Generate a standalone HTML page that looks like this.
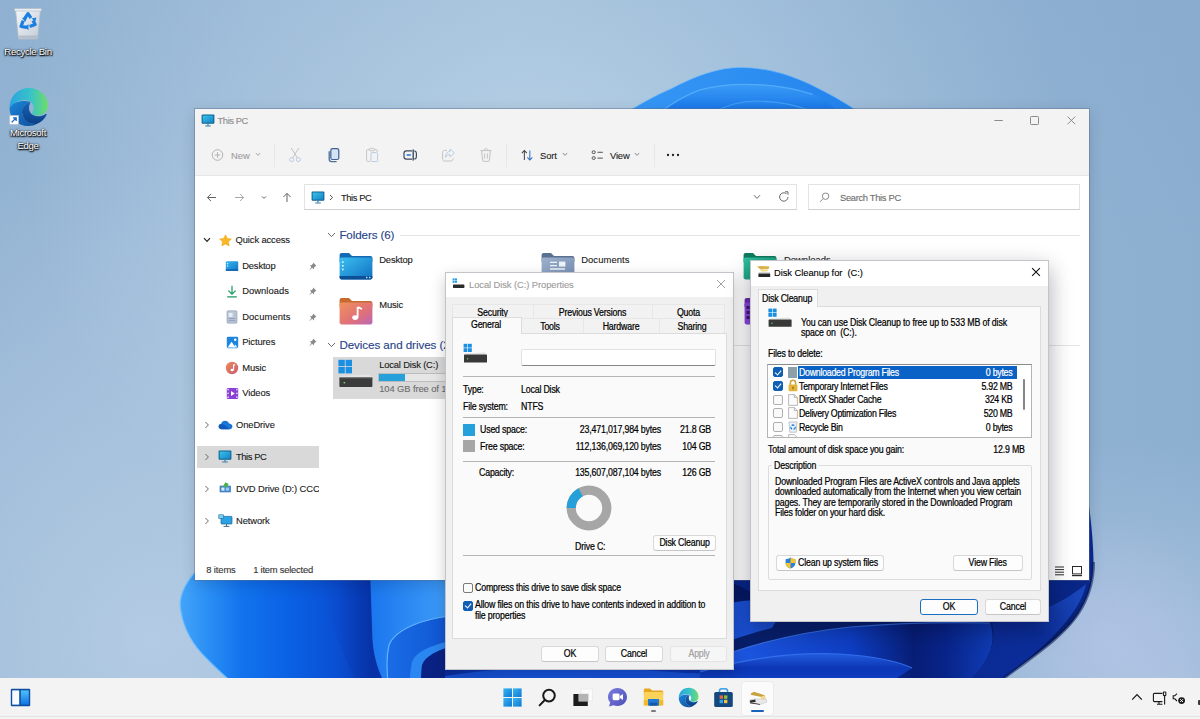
<!DOCTYPE html>
<html lang="en">
<head>
<meta charset="utf-8">
<title>This PC - Disk Cleanup</title>
<style>
*{box-sizing:border-box;margin:0;padding:0}
html,body{width:1200px;height:719px;overflow:hidden;background:#9bb8d6}
body{font-family:"Liberation Sans",sans-serif;font-size:9.4px;color:#1a1a1a;position:relative}
#desk{position:absolute;left:0;top:0;width:1200px;height:719px;overflow:hidden}
.abs{position:absolute}
.t{position:absolute;white-space:pre;line-height:12px;letter-spacing:-.1px;-webkit-text-stroke:.12px currentColor}
.d{position:absolute;white-space:pre;font-size:10px;line-height:12px;letter-spacing:-.2px;color:#000;transform:scaleX(.88);transform-origin:0 50%;margin-top:.7px;-webkit-text-stroke:.22px currentColor}
.d.r{transform-origin:100% 50%}
.d.c{transform-origin:50% 50%}
#flist .d{letter-spacing:-.3px}
svg{position:absolute;overflow:visible}
/* wallpaper */
#wall{left:0;top:0;width:1200px;height:719px}
/* desktop icons */
.dlabel{position:absolute;color:#fff;text-align:center;font-size:9.6px;line-height:12.6px;letter-spacing:-.3px;text-shadow:0 0 2px #000,0 1px 2px #000,1px 1px 1px rgba(0,0,0,.8)}
/* explorer */
#exp{left:195px;top:109px;width:894px;height:471px;background:#fff;box-shadow:0 0 0 1px rgba(90,110,140,.45),0 4px 14px rgba(0,0,30,.16)}
#exp .top{left:0;top:0;width:894px;height:67px;background:#f3f3f3;border-bottom:1px solid #e6e6e6}
.vsep{position:absolute;width:1px;background:#e7e7e7}
.box{position:absolute;background:#fff;border:1px solid #e3e3e3;border-bottom-color:#d0d0d0}
.hl{position:absolute;height:1px;background:#e4e4e4}
/* dialogs */
.dlg{position:absolute;background:#f0f0f0;border:1px solid #c3c4c9;box-shadow:0 8px 22px rgba(0,0,20,.33)}
.dlg .tb{position:absolute;left:0;top:0;right:0;background:#fff}
.btn{position:absolute;background:#fdfdfd;border:1px solid #d8d8d8;border-bottom-color:#c6c6c6;border-radius:3px;text-align:center;line-height:14px;color:#000;white-space:nowrap}
.btn span{display:inline-block;font-size:10px;letter-spacing:-.2px;transform:scaleX(.88);transform-origin:50% 50%;-webkit-text-stroke:.22px currentColor}
.line{position:absolute;height:1px;background:#b4b4b4}
.cb{position:absolute;width:10px;height:10px;border:1px solid #7a7a7a;border-radius:2px;background:#fafafa}
.cb.on{background:#0f5fb4;border-color:#0f5fb4}
.cb.on:after{content:"";position:absolute;left:2.2px;top:.2px;width:3px;height:5.2px;border:solid #fff;border-width:0 1.2px 1.2px 0;transform:rotate(40deg)}
/* taskbar */
#task{left:0;top:678px;width:1200px;height:41px;background:#f3f3f3;border-top:1px solid rgba(243,243,243,.55)}
</style>
</head>
<body>
<div id="desk">
<!--WALL-->
<svg id="wall" class="abs" viewBox="0 0 1200 719" width="1200" height="719">
<defs>
<linearGradient id="bg0" x1="0" y1="0" x2="1" y2="0"><stop offset="0" stop-color="#94b4d3"/><stop offset=".42" stop-color="#a6c3de"/><stop offset=".76" stop-color="#93b4d4"/><stop offset="1" stop-color="#8cafd0"/></linearGradient>
<radialGradient id="bg1" cx="540" cy="120" r="520" gradientUnits="userSpaceOnUse"><stop offset="0" stop-color="#c0d8ea" stop-opacity=".75"/><stop offset="1" stop-color="#c0d8ea" stop-opacity="0"/></radialGradient>
<radialGradient id="bg2" cx="150" cy="640" r="480" gradientUnits="userSpaceOnUse"><stop offset="0" stop-color="#b9cfe6" stop-opacity=".8"/><stop offset="1" stop-color="#b9cfe6" stop-opacity="0"/></radialGradient>
<radialGradient id="bg3" cx="1150" cy="700" r="260" gradientUnits="userSpaceOnUse"><stop offset="0" stop-color="#b4c8e4" stop-opacity=".8"/><stop offset="1" stop-color="#b4c8e4" stop-opacity="0"/></radialGradient>
<linearGradient id="bg4" x1="0" y1="0" x2="0" y2="1"><stop offset="0" stop-color="#7fa3c8" stop-opacity=".22"/><stop offset=".35" stop-color="#7fa3c8" stop-opacity="0"/></linearGradient>
<linearGradient id="ta" x1="632" y1="0" x2="854" y2="0" gradientUnits="userSpaceOnUse"><stop offset="0" stop-color="#3596f5"/><stop offset=".5" stop-color="#2e8ff2"/><stop offset="1" stop-color="#2382ec"/></linearGradient>
<linearGradient id="tb" x1="0" y1="84" x2="0" y2="112" gradientUnits="userSpaceOnUse"><stop offset="0" stop-color="#3a9cf6"/><stop offset="1" stop-color="#1774e8"/></linearGradient>
<linearGradient id="tc" x1="0" y1="101" x2="0" y2="114" gradientUnits="userSpaceOnUse"><stop offset="0" stop-color="#2a8cf2"/><stop offset="1" stop-color="#1268de"/></linearGradient>
<linearGradient id="bl" x1="180" y1="0" x2="372" y2="0" gradientUnits="userSpaceOnUse"><stop offset="0" stop-color="#45a4f9"/><stop offset=".14" stop-color="#2b90f5"/><stop offset=".32" stop-color="#1273ed"/><stop offset=".58" stop-color="#0a60e4"/><stop offset=".82" stop-color="#0a4fd2"/><stop offset="1" stop-color="#0838b0"/></linearGradient>
<linearGradient id="pl" x1="370" y1="0" x2="450" y2="0" gradientUnits="userSpaceOnUse"><stop offset="0" stop-color="#1a76ee"/><stop offset="1" stop-color="#3f9df8"/></linearGradient>
<linearGradient id="nv" x1="0" y1="579" x2="0" y2="680" gradientUnits="userSpaceOnUse"><stop offset="0" stop-color="#0a2a94"/><stop offset=".5" stop-color="#08206e"/><stop offset="1" stop-color="#061a62"/></linearGradient>
<linearGradient id="pm" x1="730" y1="0" x2="1000" y2="0" gradientUnits="userSpaceOnUse"><stop offset="0" stop-color="#1d58e2"/><stop offset=".45" stop-color="#0e3ec4"/><stop offset=".68" stop-color="#071e76"/><stop offset=".8" stop-color="#08248a"/><stop offset="1" stop-color="#1040bc"/></linearGradient>
<linearGradient id="blf" x1="320" y1="0" x2="372" y2="0" gradientUnits="userSpaceOnUse"><stop offset="0" stop-color="#0a4cd0" stop-opacity="0"/><stop offset="1" stop-color="#0730a4" stop-opacity=".8"/></linearGradient>
<linearGradient id="pl2" x1="388" y1="0" x2="450" y2="0" gradientUnits="userSpaceOnUse"><stop offset="0" stop-color="#1a6ce6"/><stop offset="1" stop-color="#0f55d2"/></linearGradient>
<linearGradient id="pc2" x1="0" y1="652" x2="0" y2="684" gradientUnits="userSpaceOnUse"><stop offset="0" stop-color="#2460e4"/><stop offset=".5" stop-color="#0c36b4"/><stop offset="1" stop-color="#1244c8"/></linearGradient>
<linearGradient id="pd" x1="966" y1="684" x2="1080" y2="590" gradientUnits="userSpaceOnUse"><stop offset="0" stop-color="#0a2a92"/><stop offset=".6" stop-color="#0c2e9c"/><stop offset="1" stop-color="#1a48bc"/></linearGradient>
<linearGradient id="sb" x1="445" y1="0" x2="736" y2="0" gradientUnits="userSpaceOnUse"><stop offset="0" stop-color="#0a2a9a"/><stop offset=".25" stop-color="#0e44c8"/><stop offset=".7" stop-color="#0c3cc0"/><stop offset="1" stop-color="#0a2c9c"/></linearGradient>
<radialGradient id="bg5" cx="1110" cy="640" r="120" gradientUnits="userSpaceOnUse"><stop offset="0" stop-color="#b4c4e6" stop-opacity=".7"/><stop offset="1" stop-color="#b4c4e6" stop-opacity="0"/></radialGradient>
</defs>
<rect width="1200" height="719" fill="url(#bg0)"/>
<rect width="1200" height="719" fill="url(#bg1)"/>
<rect width="1200" height="719" fill="url(#bg2)"/>
<rect width="1200" height="719" fill="url(#bg3)"/>
<rect width="1200" height="719" fill="url(#bg4)"/>
<rect width="1200" height="719" fill="url(#bg5)"/>
<!-- top arch -->
<path d="M624 114 C645 101 660 93.5 671 88.8 C695 76 718 67.4 740.5 67.4 C768 67.4 795 76 819 88.8 C832 95 847 104 862 114 Z" fill="url(#ta)" stroke="#6cb8fb" stroke-width="1" stroke-opacity=".7"/>
<path d="M658 114 C675 101 688 94 700 89.9 C715 85.5 730 84.3 745 84.3 C772 84.3 795 88.5 812.5 94.4 C822 98 831 104 842 114 Z" fill="url(#tb)"/>
<path d="M658 114 C675 101 688 94 700 89.9 C715 85.5 730 84.3 745 84.3 C772 84.3 795 88.5 812.5 94.4" fill="none" stroke="#58b0fb" stroke-width="1.3" stroke-opacity=".85"/>
<path d="M710 114 C728 104 742 101 756 101 C776 101 794 104 814 112 L814 114 Z" fill="url(#tc)"/>
<path d="M710 114 C728 104 742 101 756 101 C776 101 794 104 814 112" fill="none" stroke="#4aa6f8" stroke-width="1.1" stroke-opacity=".8"/>
<!-- bottom left -->
<path d="M197 570 C183 585 178 600 181 612 C184 630 194 646 206 658 C216 668 224 676 234 684 L400 684 L400 570 Z" fill="url(#bl)"/>
<path d="M197 570 C183 585 178 600 181 612 C184 630 194 646 206 658 C216 668 224 676 234 684" fill="none" stroke="#6fc0ff" stroke-width="1.4" opacity=".8"/>
<path d="M318 570 C326 610 340 650 358 684 L400 684 L400 570 Z" fill="url(#blf)"/>
<path d="M370 570 L372.5 640 C374 660 379 672 385 684 L450 684 L450 570 Z" fill="url(#pl)"/>
<path d="M450 616 C425 619 396 628 389 645 C386 658 387 670 388 684 L450 684 Z" fill="url(#pl2)" stroke="#62b4fd" stroke-width="1.2"/>
<path d="M450 641 C432 645 415 652 412 662 C410 670 410 676 410 684 L450 684 Z" fill="#2a86f0"/>
<path d="M450 647 C438 650 425 656 422 665 C421 672 421 678 421 684 L450 684 Z" fill="#0a2284"/>
<!-- bottom middle/right -->
<path d="M445 570 L1089 570 L1089 506 C1091 520 1093.5 545 1093.5 562 C1093.5 585 1086 602 1078 614 C1066 632 1048 646 1004 678 L1000 684 L445 684 Z" fill="url(#nv)"/>
<path d="M445 655 H736 V684 H445 Z" fill="url(#sb)"/>
<path d="M445 676 C500 668 560 664 620 668 C660 671 700 676 736 672 L736 684 H445 Z" fill="#1a56dc" opacity=".8"/>
<path d="M700 606 C730 596 760 590 800 588 C790 600 780 614 772 628 C748 634 724 642 700 654 Z" fill="#1a50d4"/>
<path d="M700 575 C725 578 745 586 760 600 C740 600 720 604 700 612 Z" fill="#061a66"/>
<path d="M700 690 L700 664 C750 644 800 632 850 627 C900 623 950 622 990 623 C997 642 990 662 966 684 Z" fill="url(#pm)"/>
<path d="M700 664 C750 644 800 632 850 627 C900 623 950 622 990 623" fill="none" stroke="#3f7af0" stroke-width="1.2" opacity=".8"/>
<path d="M700 690 L700 672 C740 660 790 652 840 654 C870 656 895 660 912 668 C900 676 890 682 880 690 Z" fill="url(#pc2)"/>
<path d="M700 672 C740 660 790 652 840 654 C870 656 895 660 912 668" fill="none" stroke="#3a74ee" stroke-width="1.1" opacity=".85"/>
<path d="M992 623 C1030 618 1062 604 1086 584 C1082 606 1060 636 1004 678 L966 684 C990 662 997 642 992 623 Z" fill="url(#pd)"/>
<path d="M1093.5 562 C1093.5 585 1086 602 1078 614 C1066 632 1048 646 1004 678" fill="none" stroke="#05154f" stroke-width="3" opacity=".55"/>
</svg>
<!--/WALL-->
<!--DESKICONS-->
<!-- Recycle Bin -->
<svg class="abs" style="left:13px;top:7px" width="30" height="34" viewBox="0 0 30 34">
<defs><linearGradient id="rb1" x1="0" y1="0" x2="1" y2="1"><stop offset="0" stop-color="#f4f7fa"/><stop offset="1" stop-color="#c3ccd6"/></linearGradient></defs>
<path d="M2.5 2.5 L27.5 2.5 L24.5 32 L5.5 32 Z" fill="url(#rb1)" stroke="#b4bec9" stroke-width=".8"/>
<path d="M1.5 1.5 H28.5 V4 H1.5 Z" fill="#e9eef3" stroke="#aeb9c5" stroke-width=".6"/>
<path d="M5.8 28.5 H24.2 L24 31.5 H6.1 Z" fill="#aab4c0" opacity=".7"/>
<g fill="none" stroke="#1b7fe2" stroke-width="3.2" stroke-linejoin="round" stroke-linecap="butt">
<path d="M11.6 11.6 L15 6.6 L18 11"/><path d="M20 13.4 L22.2 17.6 L16.6 19.6"/><path d="M13.4 20.4 L8 19.4 L10.2 13.6"/>
</g>
<g fill="#1b7fe2"><path d="M9 11 L14.2 10.4 L12.2 15 Z"/><path d="M22.4 14.6 L18.4 11.6 L23.4 10.4 Z"/><path d="M15.4 17.2 L15.6 23 L11 20.2 Z"/></g>
</svg>
<div class="dlabel" style="left:-12px;top:46px;width:80px">Recycle Bin</div>
<!-- Edge -->
<svg class="abs" style="left:8px;top:87px" width="41" height="40" viewBox="0 0 41 40">
<defs>
<linearGradient id="eg1" x1="0" y1="0" x2="1" y2="0"><stop offset="0" stop-color="#2ba3e0"/><stop offset=".55" stop-color="#38c3c8"/><stop offset="1" stop-color="#6fdc6a"/></linearGradient>
<linearGradient id="eg2" x1="0" y1="0" x2="1" y2="1"><stop offset="0" stop-color="#1b86d8"/><stop offset="1" stop-color="#0f4f9e"/></linearGradient>
<linearGradient id="eg3" x1="0" y1="0" x2="0" y2="1"><stop offset="0" stop-color="#1565b8"/><stop offset="1" stop-color="#0c3f86"/></linearGradient>
</defs>
<path d="M1.5 21 C1.5 9 10 1 21 1 C32 1 40 9 40 18.5 C40 25 35 28.5 29.5 28.5 C25.5 28.5 23.5 27 24.5 25.2 C26 23 26 21 25.5 19 C24.5 15 21 13 17 13 C10 13 4 17.5 1.5 21 Z" fill="url(#eg1)"/>
<path d="M1.5 21 C1.5 31 9.5 39 20 39 C24 39 27 38 28.5 37 C21 37.5 14.5 32.5 14 25.5 C13.8 19.5 18.5 15.5 22.5 15 C15 12.5 5 15 1.5 21 Z" fill="url(#eg2)"/>
<path d="M14 25.5 C14.5 32.5 21 37.8 28.5 37 C33 35.5 36.5 32 38.5 28 C39 27 38 26.6 37.2 27.2 C34 29.5 28.5 30 25 28 C20.5 25.5 20 20 22.5 15 C18.5 15.5 13.8 19.5 14 25.5 Z" fill="url(#eg3)"/>
</svg>
<svg class="abs" style="left:9px;top:115px" width="10" height="10" viewBox="0 0 10 10"><rect x=".3" y=".3" width="9.4" height="9.4" fill="#fff" stroke="#9fb3c8" stroke-width=".6"/><path d="M2.6 7.4 L7 3 M4 2.8 H7.2 V6" fill="none" stroke="#1b66c9" stroke-width="1.3"/></svg>
<div class="dlabel" style="left:-12px;top:127px;width:80px">Microsoft<br>Edge</div>
<!--/DESKICONS-->
<!--EXPLORER-->
<svg class="abs" width="0" height="0" style="left:0;top:0"><defs>
<linearGradient id="pcg" x1="0" y1="0" x2="1" y2="1"><stop offset="0" stop-color="#39c2ea"/><stop offset="1" stop-color="#1583c6"/></linearGradient>
<symbol id="pc" viewBox="0 0 14 13"><rect x=".6" y=".6" width="12.8" height="9.2" rx="1" fill="#0f5f8e"/><rect x="1.6" y="1.5" width="10.8" height="7.2" fill="url(#pcg)"/><path d="M6.2 9.8 H7.8 V11.6 H6.2 Z" fill="#4a90b8"/><path d="M4.2 12 H9.8" stroke="#3a7fa8" stroke-width="1"/></symbol>
</defs></svg>
<div id="expl" class="abs" style="left:0;top:0;width:1200px;height:719px">
<div id="exp" class="abs"><div class="top abs"></div></div>
<!-- title -->
<svg class="abs pcico" style="left:201px;top:114px" width="14" height="13" viewBox="0 0 14 13"><use href="#pc"/></svg>
<div class="t" style="left:217.6px;top:114.8px;color:#8c8c8c;letter-spacing:-.45px">This PC</div>
<svg class="abs" style="left:990px;top:113px" width="90" height="14" viewBox="0 0 90 14" fill="none" stroke="#8a8a8a" stroke-width="1"><path d="M4.4 7.5 H12.8"/><rect x="40.5" y="3.5" width="8" height="8" rx=".8"/><path d="M77.6 3.6 L85.2 11.2 M85.2 3.6 L77.6 11.2"/></svg>
<!-- toolbar -->
<svg class="abs" style="left:211px;top:148px" width="14" height="14" viewBox="0 0 14 14" fill="none" stroke="#b4b4b4" stroke-width="1"><circle cx="6.5" cy="7" r="5.3"/><path d="M6.5 4.2 V9.8 M3.7 7 H9.3"/></svg>
<div class="t" style="left:231px;top:149.5px;color:#a0a0a0;letter-spacing:0">New</div>
<svg class="abs" style="left:255px;top:152px" width="6" height="5" viewBox="0 0 6 5" fill="none" stroke="#a8a8a8" stroke-width="1"><path d="M.8 1 L3 3.4 L5.2 1"/></svg>
<div class="vsep" style="left:274px;top:144px;height:23px"></div>
<!-- cut -->
<svg class="abs" style="left:288px;top:147px" width="14" height="16" viewBox="0 0 14 16" fill="none" stroke="#b9cde4" stroke-width="1"><path d="M3.2 1 L9.4 11 M10.8 1 L4.6 11" stroke="#c4c4c4"/><circle cx="3.6" cy="12.6" r="2"/><circle cx="10.4" cy="12.6" r="2"/></svg>
<!-- copy -->
<svg class="abs" style="left:327px;top:147px" width="14" height="16" viewBox="0 0 14 16" fill="none"><path d="M2.2 4.2 V12.2 C2.2 13.8 3.2 14.6 4.6 14.6 H9.6" stroke="#4d6c98" stroke-width="1.3"/><rect x="3.8" y="1.7" width="8" height="10.8" rx="1.8" fill="#d3e3f5" stroke="#3d5f92" stroke-width="1.2"/></svg>
<!-- paste -->
<svg class="abs" style="left:365px;top:147px" width="14" height="16" viewBox="0 0 14 16" fill="none" stroke="#c6c6c6" stroke-width="1"><path d="M4.4 2.6 H2.6 C2 2.6 1.6 3 1.6 3.6 V13.4 C1.6 14 2 14.4 2.6 14.4 H5"/><path d="M9.4 2.6 H11.2 C11.8 2.6 12.2 3 12.2 3.6 V5"/><rect x="4.4" y="1.4" width="5" height="2.4" rx=".8"/><rect x="6" y="5.6" width="6.6" height="9" rx="1" stroke="#b9cde4"/></svg>
<!-- rename -->
<svg class="abs" style="left:402px;top:147px" width="16" height="16" viewBox="0 0 16 16" fill="none" stroke="#3c4a5e" stroke-width="1.2"><path d="M10 3.8 H4.4 C3 3.8 2 4.8 2 6.2 V9.8 C2 11.2 3 12.2 4.4 12.2 H10"/><path d="M12.4 3.8 C13.6 4 14.4 5 14.4 6.2 V9.8 C14.4 11 13.6 12 12.4 12.2"/><path d="M11.2 2.4 V13.6" stroke="#2f3f58" stroke-width="1.3"/><path d="M4.6 8 H8.8" stroke="#2a78d6" stroke-width="1.6"/></svg>
<!-- share -->
<svg class="abs" style="left:441px;top:147px" width="15" height="16" viewBox="0 0 15 16" fill="none" stroke="#c4c4c4" stroke-width="1"><path d="M6 3.4 H3.4 C2.4 3.4 1.6 4.2 1.6 5.2 V12.2 C1.6 13.2 2.4 14 3.4 14 H10.2 C11.2 14 12 13.2 12 12.2 V11.4"/><path d="M9 2 L13.4 6 L9 10 V7.6 C6.6 7.6 5.2 8.6 4.4 10.4 C4.6 7 6.2 4.6 9 4.4 Z" stroke="#b9cde4"/></svg>
<!-- delete -->
<svg class="abs" style="left:479px;top:147px" width="14" height="16" viewBox="0 0 14 16" fill="none" stroke="#c4c4c4" stroke-width="1"><path d="M1.4 3.6 H12.6 M5 3.4 C5 2.2 5.8 1.6 7 1.6 C8.2 1.6 9 2.2 9 3.4"/><path d="M2.6 3.8 L3.6 13.2 C3.7 14 4.2 14.4 5 14.4 H9 C9.8 14.4 10.3 14 10.4 13.2 L11.4 3.8"/><path d="M5.6 6.4 V11.6 M8.4 6.4 V11.6"/></svg>
<div class="vsep" style="left:506px;top:144px;height:23px"></div>
<!-- sort -->
<svg class="abs" style="left:520.5px;top:149px" width="12.4" height="12.4" viewBox="0 0 14 14" fill="none" stroke-width="1.15"><path d="M3.8 12.4 V1.8 M1 4.6 L3.8 1.6 L6.6 4.6" stroke="#444"/><path d="M10 1.6 V12.2 M7.2 9.4 L10 12.4 L12.8 9.4" stroke="#2f6fc4"/></svg>
<div class="t" style="left:540px;top:149.5px;color:#1f1f1f;letter-spacing:-.1px">Sort</div>
<svg class="abs" style="left:562px;top:152px" width="6" height="5" viewBox="0 0 6 5" fill="none" stroke="#8a8a8a" stroke-width="1"><path d="M.8 1 L3 3.4 L5.2 1"/></svg>
<!-- view -->
<svg class="abs" style="left:590.5px;top:150px" width="13" height="10.6" viewBox="0 0 14 12" fill="none" stroke="#444" stroke-width="1.05"><rect x="1" y="1" width="3.4" height="3" rx="1.2"/><rect x="1" y="7.6" width="3.4" height="3" rx="1.2"/><path d="M7 2.6 H13 M7 9.2 H13"/></svg>
<div class="t" style="left:610px;top:149.5px;color:#1f1f1f;letter-spacing:-.15px">View</div>
<svg class="abs" style="left:634px;top:152px" width="6" height="5" viewBox="0 0 6 5" fill="none" stroke="#8a8a8a" stroke-width="1"><path d="M.8 1 L3 3.4 L5.2 1"/></svg>
<div class="vsep" style="left:654px;top:144px;height:23px"></div>
<svg class="abs" style="left:666px;top:153px" width="14" height="4" viewBox="0 0 14 4" fill="#1f1f1f"><circle cx="2" cy="2" r="1.15"/><circle cx="7" cy="2" r="1.15"/><circle cx="12" cy="2" r="1.15"/></svg>
<!-- nav row -->
<svg class="abs" style="left:205px;top:191px" width="90" height="13" viewBox="0 0 90 13" fill="none" stroke-width="1" stroke-linejoin="round">
<path d="M11 6.5 H2.6 M6 2.9 L2.4 6.5 L6 10.1" stroke="#616161"/>
<path d="M30 6.5 H38.4 M35 2.9 L38.6 6.5 L35 10.1" stroke="#a6a6a6"/>
<path d="M57 5.4 L59 7.4 L61 5.4" stroke="#616161"/>
<path d="M82 11 V2.6 M78.4 6 L82 2.4 L85.6 6" stroke="#616161"/>
</svg>
<div class="box" style="left:304px;top:184px;width:493px;height:26.4px"></div>
<svg class="abs pcico" style="left:311px;top:191px" width="14" height="13" viewBox="0 0 14 13"><use href="#pc"/></svg>
<svg class="abs" style="left:329px;top:194px" width="5" height="7" viewBox="0 0 5 7" fill="none" stroke="#555" stroke-width="1"><path d="M1 1 L3.6 3.5 L1 6"/></svg>
<div class="t" style="left:341px;top:191.5px;color:#1a1a1a;letter-spacing:-.42px">This PC</div>
<svg class="abs" style="left:753px;top:194px" width="8" height="6" viewBox="0 0 8 6" fill="none" stroke="#666" stroke-width="1"><path d="M1 1.2 L4 4.4 L7 1.2"/></svg>
<svg class="abs" style="left:778px;top:191px" width="12" height="12" viewBox="0 0 12 12" fill="none" stroke="#666" stroke-width="1"><path d="M10 6 A4.2 4.2 0 1 1 8.4 2.7"/><path d="M7 .8 H10 V3.8" /></svg>
<div class="box" style="left:808px;top:184px;width:272px;height:26.4px"></div>
<svg class="abs" style="left:819px;top:192px" width="11" height="11" viewBox="0 0 11 11" fill="none" stroke="#8a8a8a" stroke-width="1"><circle cx="6.6" cy="4.2" r="3.2"/><path d="M4.2 6.6 L1 9.8"/></svg>
<div class="t" style="left:840px;top:191.5px;color:#6e6e6e;letter-spacing:-.33px">Search This PC</div>
<!-- sidebar -->
<svg class="abs" style="left:203px;top:237px" width="8" height="6" viewBox="0 0 8 6" fill="none" stroke="#222" stroke-width="1.2"><path d="M1 1.2 L4 4.4 L7 1.2"/></svg>
<svg class="abs" style="left:219px;top:234px" width="13" height="13" viewBox="0 0 13 13"><path d="M6.5 .8 L8.3 4.5 L12.4 5 L9.4 7.8 L10.2 11.9 L6.5 9.9 L2.8 11.9 L3.6 7.8 L.6 5 L4.7 4.5 Z" fill="#f8b823" stroke="#e9a010" stroke-width=".5" stroke-linejoin="round"/></svg>
<div class="t" style="left:235.6px;top:234px;letter-spacing:-.12px">Quick access</div>
<!-- Desktop -->
<svg class="abs" style="left:225px;top:260px" width="14" height="12" viewBox="0 0 14 12"><defs><linearGradient id="sd1" x1="0" y1="0" x2="1" y2="1"><stop offset="0" stop-color="#35b6ee"/><stop offset="1" stop-color="#1276c8"/></linearGradient></defs><rect x=".8" y="1.2" width="12.4" height="9.6" rx="1.2" fill="url(#sd1)"/><rect x="2" y="3" width="1.2" height="1.2" fill="#d8f2ff"/><rect x="2" y="5.4" width="1.2" height="1.2" fill="#d8f2ff"/><rect x=".8" y="9.4" width="12.4" height="1.4" fill="#0d5aa8"/></svg>
<div class="t" style="left:242.2px;top:260px;letter-spacing:-.16px">Desktop</div>
<!-- Downloads -->
<svg class="abs" style="left:226px;top:285px" width="12" height="13" viewBox="0 0 12 13" fill="none" stroke="#199a62" stroke-width="1.2"><path d="M6 .8 V9 M2.4 5.6 L6 9.2 L9.6 5.6 M1.2 11.8 H10.8"/></svg>
<div class="t" style="left:242.2px;top:285.4px;letter-spacing:.04px">Downloads</div>
<!-- Documents -->
<svg class="abs" style="left:226px;top:310px" width="12" height="14" viewBox="0 0 12 14"><rect x="1" y=".8" width="10" height="12.4" rx="1" fill="#b9c4d6" stroke="#8e9bb3" stroke-width=".6"/><rect x="2.6" y="2.8" width="4" height="4" fill="#e9eef6"/><path d="M2.6 8.6 H9.4 M2.6 10.6 H9.4" stroke="#8493b0" stroke-width=".8"/></svg>
<div class="t" style="left:242.2px;top:310.8px;letter-spacing:.1px">Documents</div>
<!-- Pictures -->
<svg class="abs" style="left:226px;top:336px" width="13" height="13" viewBox="0 0 13 13"><rect x=".8" y=".8" width="11.4" height="11.4" rx="1.4" fill="#1f86e0"/><path d="M1.6 11.4 L5.6 5.8 L9.4 11.4 Z" fill="#fff"/><path d="M7 11.4 L9.4 8.4 L11.6 11.4 Z" fill="#d6ebff"/><circle cx="9.2" cy="3.8" r="1.2" fill="#fff"/></svg>
<div class="t" style="left:242.2px;top:336.2px;letter-spacing:-.1px">Pictures</div>
<!-- Music -->
<svg class="abs" style="left:225px;top:361px" width="14" height="14" viewBox="0 0 14 14"><defs><linearGradient id="sm1" x1="0" y1="0" x2="1" y2="1"><stop offset="0" stop-color="#ee8a5a"/><stop offset="1" stop-color="#c85a72"/></linearGradient></defs><circle cx="7" cy="7" r="6.2" fill="url(#sm1)"/><path d="M8.6 3.4 V8.8" stroke="#fff" stroke-width="1.1"/><ellipse cx="7.2" cy="9" rx="1.7" ry="1.3" fill="#fff"/><path d="M8.6 3.4 L10.2 4.2" stroke="#fff" stroke-width="1.1"/></svg>
<div class="t" style="left:242.2px;top:361.6px;letter-spacing:-.1px">Music</div>
<!-- Videos -->
<svg class="abs" style="left:226px;top:387px" width="13" height="13" viewBox="0 0 13 13"><rect x=".8" y="1" width="11.4" height="11" rx="1.2" fill="#8a3fd6"/><rect x="1.4" y="1.8" width="1.4" height="1.6" fill="#e9d5ff"/><rect x="1.4" y="5.6" width="1.4" height="1.6" fill="#e9d5ff"/><rect x="1.4" y="9.4" width="1.4" height="1.6" fill="#e9d5ff"/><rect x="10.2" y="1.8" width="1.4" height="1.6" fill="#e9d5ff"/><rect x="10.2" y="5.6" width="1.4" height="1.6" fill="#e9d5ff"/><rect x="10.2" y="9.4" width="1.4" height="1.6" fill="#e9d5ff"/><path d="M5 4 L8.8 6.5 L5 9 Z" fill="#fff"/></svg>
<div class="t" style="left:242.2px;top:387px;letter-spacing:-.1px">Videos</div>
<!-- pins -->
<svg class="abs" style="left:308px;top:262px" width="9" height="9" viewBox="0 0 9 9" id="pin0"><path d="M5.2 .6 L8.4 3.8 L7.4 4.2 L6 5.8 L5.8 7.4 L4.2 5.8 L1 8.4 L3.4 5 L1.8 3.4 L3.4 3.2 L5 1.8 Z" fill="#8a8a8a"/></svg>
<svg class="abs" style="left:308px;top:287px" width="9" height="9" viewBox="0 0 9 9"><use href="#pin0" /></svg>
<svg class="abs" style="left:308px;top:313px" width="9" height="9" viewBox="0 0 9 9"><use href="#pin0"/></svg>
<svg class="abs" style="left:308px;top:338px" width="9" height="9" viewBox="0 0 9 9"><use href="#pin0"/></svg>
<!-- lower group -->
<div class="abs" style="left:197px;top:446px;width:122px;height:22px;background:#d9d9d9"></div>
<svg class="abs" style="left:204px;top:421px" width="6" height="104" viewBox="0 0 6 104" fill="none" stroke="#6a6a6a" stroke-width="1"><path d="M1.4 1 L4.4 4 L1.4 7"/><path d="M1.4 33 L4.4 36 L1.4 39"/><path d="M1.4 65 L4.4 68 L1.4 71"/><path d="M1.4 97 L4.4 100 L1.4 103"/></svg>
<!-- onedrive -->
<svg class="abs" style="left:218px;top:420px" width="15" height="10" viewBox="0 0 15 10"><path d="M3.6 9.2 C1.8 9.2 .6 8 .6 6.6 C.6 5.2 1.6 4.2 3 4 C3.6 2 5.2 .8 7.2 .8 C9 .8 10.4 1.8 11 3.4 C13 3.4 14.4 4.8 14.4 6.4 C14.4 8 13.2 9.2 11.6 9.2 Z" fill="#1976d8"/><path d="M3 4 C4.6 3.6 6 4.4 7 5.6 L11.6 9.2 H3.6 C1.8 9.2 .6 8 .6 6.6 C.6 5.2 1.6 4.2 3 4 Z" fill="#1059b8"/></svg>
<div class="t" style="left:236px;top:419px;letter-spacing:-.1px">OneDrive</div>
<svg class="abs pcico" style="left:218px;top:450px" width="14" height="13" viewBox="0 0 14 13"><use href="#pc"/></svg>
<div class="t" style="left:236px;top:451px;letter-spacing:-.42px">This PC</div>
<!-- dvd -->
<svg class="abs" style="left:219px;top:481px" width="13" height="13" viewBox="0 0 13 13"><rect x="1" y="5" width="10.6" height="6" fill="#4d8fd0" stroke="#2d6cb0" stroke-width=".6"/><path d="M3.6 6 L6.4 1.2 L9.6 3 L8.4 6 Z" fill="#4caf50"/><rect x="2.4" y="6.6" width="3" height="3" fill="#d9ecff"/><rect x="7" y="6.6" width="3" height="3" fill="#9cc8f5"/></svg>
<div class="abs" style="left:236px;top:483px;width:83px;height:12px;overflow:hidden"><div class="t" style="left:0;top:0;letter-spacing:-.1px">DVD Drive (D:) CCCOMA_X64</div></div>
<!-- network -->
<svg class="abs" style="left:218px;top:514px" width="15" height="14" viewBox="0 0 15 14"><rect x="3" y="2.4" width="11" height="7.6" rx=".6" fill="#2aa2e4" stroke="#14679f" stroke-width=".7"/><rect x=".8" y=".8" width="4.8" height="3.8" fill="#7fd0f5" stroke="#14679f" stroke-width=".6"/><path d="M8.5 10 V12 M5.6 12.4 H11.4" stroke="#4a6a86" stroke-width="1"/></svg>
<div class="t" style="left:236px;top:514.6px;letter-spacing:-.1px">Network</div>
<!-- status -->
<div class="t" style="left:206.2px;top:564.4px;color:#333;letter-spacing:-.1px">8 items</div>
<div class="t" style="left:253.2px;top:564.4px;color:#333;letter-spacing:-.22px">1 item selected</div>
<svg class="abs" style="left:1054px;top:565px" width="30" height="12" viewBox="0 0 30 12" fill="none" stroke="#2a2a2a" stroke-width="1"><path d="M1 2 H10 M1 4.6 H10 M1 7.2 H10 M1 9.8 H10"/><rect x="18.5" y="1.5" width="9" height="7.4"/><path d="M18 10.6 H28" stroke-width="1.2"/></svg>

<!-- content -->
<svg class="abs" style="left:327px;top:232px" width="9" height="6" viewBox="0 0 9 6" fill="none" stroke="#6a6a6a" stroke-width="1"><path d="M1 1 L4.5 4.6 L8 1"/></svg>
<div class="t" style="left:339.4px;top:228px;font-size:11.6px;line-height:14px;color:#27428a;letter-spacing:-.1px">Folders (6)</div>
<div class="hl" style="left:400px;top:235px;width:680px"></div>
<!-- Desktop folder -->
<svg class="abs" style="left:339px;top:252px" width="34" height="28" viewBox="0 0 34 28"><defs><linearGradient id="fd1" x1="0" y1="0" x2="1" y2="1"><stop offset="0" stop-color="#3cc0f0"/><stop offset="1" stop-color="#0f6fc2"/></linearGradient></defs><path d="M.6 3 C.6 1.8 1.4 1 2.6 1 H10 L13 4 H31.4 C32.6 4 33.4 4.8 33.4 6 V10 H.6 Z" fill="#1468b4"/><rect x=".6" y="5.4" width="32.8" height="22" rx="1.8" fill="url(#fd1)"/><rect x="3" y="9.4" width="1.6" height="1.6" fill="#dff5ff"/><rect x="3" y="13" width="1.6" height="1.6" fill="#dff5ff"/><rect x="3" y="16.6" width="1.6" height="1.6" fill="#dff5ff"/><path d="M.6 24 H33.4 V25.6 C33.4 26.8 32.6 27.4 31.4 27.4 H2.6 C1.4 27.4 .6 26.8 .6 25.6 Z" fill="#0c4f96"/><rect x="27" y="24.8" width="1.4" height="1.4" fill="#cfeaff"/><rect x="30" y="24.8" width="1.4" height="1.4" fill="#cfeaff"/></svg>
<div class="t" style="left:379.2px;top:254.4px;letter-spacing:-.14px">Desktop</div>
<!-- Documents folder -->
<svg class="abs" style="left:541px;top:252px" width="34" height="28" viewBox="0 0 34 28"><defs><linearGradient id="fd2" x1="0" y1="0" x2="1" y2="1"><stop offset="0" stop-color="#9db1cd"/><stop offset="1" stop-color="#748cb0"/></linearGradient></defs><path d="M.6 3 C.6 1.8 1.4 1 2.6 1 H10 L13 4 H31.4 C32.6 4 33.4 4.8 33.4 6 V10 H.6 Z" fill="#5a7192"/><rect x=".6" y="5.4" width="32.8" height="22" rx="1.8" fill="url(#fd2)"/><path d="M9 10.4 H16 M9 13.6 H16 M9 17 H24" stroke="#eef3fa" stroke-width="1.4"/><rect x="18" y="9.6" width="6.4" height="5" fill="#eef3fa"/></svg>
<div class="t" style="left:581.2px;top:254.4px;letter-spacing:.1px">Documents</div>
<!-- Downloads folder -->
<svg class="abs" style="left:743.4px;top:252px" width="34" height="28" viewBox="0 0 34 28"><defs><linearGradient id="fd3" x1="0" y1="0" x2="1" y2="1"><stop offset="0" stop-color="#2ec4a0"/><stop offset="1" stop-color="#128a6c"/></linearGradient></defs><path d="M.6 3 C.6 1.8 1.4 1 2.6 1 H10 L13 4 H31.4 C32.6 4 33.4 4.8 33.4 6 V10 H.6 Z" fill="#0e7a5e"/><rect x=".6" y="5.4" width="32.8" height="22" rx="1.8" fill="url(#fd3)"/></svg>
<div class="t" style="left:784px;top:254.4px;letter-spacing:.04px">Downloads</div>
<!-- Music folder -->
<svg class="abs" style="left:339px;top:297px" width="34" height="28" viewBox="0 0 34 28"><defs><linearGradient id="fd4" x1="0" y1="0" x2="1" y2="1"><stop offset="0" stop-color="#f0925a"/><stop offset=".6" stop-color="#e0707a"/><stop offset="1" stop-color="#b868b8"/></linearGradient></defs><path d="M.6 3 C.6 1.8 1.4 1 2.6 1 H10 L13 4 H31.4 C32.6 4 33.4 4.8 33.4 6 V10 H.6 Z" fill="#c86a30"/><rect x=".6" y="5.4" width="32.8" height="22" rx="1.8" fill="url(#fd4)"/><path d="M18.6 10 V20.4 M18.6 10 L23 12" stroke="#fff" stroke-width="1.8" fill="none"/><ellipse cx="16.2" cy="20.6" rx="3" ry="2.4" fill="#fff"/></svg>
<div class="t" style="left:379.2px;top:298.8px;letter-spacing:-.1px">Music</div>
<!-- Videos folder (mostly hidden) -->
<svg class="abs" style="left:744px;top:297px" width="34" height="28" viewBox="0 0 34 28"><path d="M.6 3 C.6 1.8 1.4 1 2.6 1 H10 L13 4 H31.4 V10 H.6 Z" fill="#6a2fb0"/><rect x=".6" y="5.4" width="32.8" height="22" rx="1.8" fill="#8a45d8"/><rect x="2.6" y="9" width="3" height="3" fill="#3a1870"/><rect x="2.6" y="14" width="3" height="3" fill="#3a1870"/><rect x="2.6" y="19" width="3" height="3" fill="#3a1870"/></svg>
<!-- Devices header -->
<svg class="abs" style="left:327px;top:342px" width="9" height="6" viewBox="0 0 9 6" fill="none" stroke="#6a6a6a" stroke-width="1"><path d="M1 1 L4.5 4.6 L8 1"/></svg>
<div class="t" style="left:339.4px;top:338.4px;font-size:11.6px;line-height:14px;color:#27428a;letter-spacing:-.06px">Devices and drives (2)</div>
<div class="hl" style="left:470px;top:345px;width:610px"></div>
<!-- Local disk -->
<div class="abs" style="left:333px;top:357px;width:190px;height:42px;background:#d9d9d9"></div>
<svg class="abs" style="left:338px;top:359px" width="36" height="30" viewBox="0 0 36 30"><g fill="#1b8fe2"><rect x=".4" y=".8" width="6.4" height="6.4"/><rect x="7.6" y=".8" width="6.4" height="6.4"/><rect x=".4" y="8" width="6.4" height="6.4"/><rect x="7.6" y="8" width="6.4" height="6.4"/></g><path d="M3 17 L31 15.4 L34.4 18.4 H1.4 Z" fill="#e6e6e6"/><rect x="1.4" y="18.4" width="33" height="9.6" rx=".8" fill="#3b3b3b"/><rect x="1.4" y="18.4" width="33" height="1" fill="#6a6a6a"/><rect x="5.6" y="23" width="1.6" height="1.4" fill="#55e06a"/></svg>
<div class="t" style="left:379.2px;top:359.4px;letter-spacing:-.17px">Local Disk (C:)</div>
<div class="abs" style="left:378px;top:373px;width:120px;height:9px;background:#e6e6e6;border:1px solid #bcbcbc"><div style="width:26px;height:7px;background:#26a0da"></div></div>
<div class="t" style="left:379.2px;top:383.4px;color:#6d6d6d;letter-spacing:-.1px">104 GB free of 126 GB</div>

</div>
<!--/EXPLORER-->
<!--PROPS-->
<div id="props" class="abs" style="left:0;top:0;width:1200px;height:719px">
<div class="dlg" style="left:445px;top:272px;width:289.4px;height:397.6px;box-shadow:0 5px 14px rgba(0,0,20,.2)"><div class="tb" style="height:23.6px"></div></div>
<svg class="abs" style="left:452px;top:278px" width="13" height="11" viewBox="0 0 13 11"><g fill="#1b9be2"><rect x=".6" y=".4" width="2" height="2"/><rect x="3" y=".4" width="2" height="2"/><rect x=".6" y="2.8" width="2" height="2"/><rect x="3" y="2.8" width="2" height="2"/></g><rect x="1" y="6.6" width="11.4" height="3.4" rx=".4" fill="#2b2b2b"/></svg>
<div class="t" style="left:469px;top:279.2px;color:#9c9c9c;letter-spacing:-.08px">Local Disk (C:) Properties</div>
<svg class="abs" style="left:716px;top:279px" width="10" height="10" viewBox="0 0 10 10" fill="none" stroke="#a2a2a2" stroke-width="1"><path d="M1 1 L9 9 M9 1 L1 9"/></svg>
<!-- tabs -->
<div class="abs" style="left:452px;top:304px;width:273px;height:15px;background:#f2f2f2;border:1px solid #e7e7e7"></div>
<div class="abs" style="left:452px;top:318px;width:273px;height:16px;background:#f2f2f2;border:1px solid #e7e7e7"></div>
<div class="vsep" style="left:533px;top:305px;height:13px;background:#e7e7e7"></div>
<div class="vsep" style="left:652px;top:305px;height:13px;background:#e7e7e7"></div>
<div class="vsep" style="left:583px;top:319px;height:14px;background:#e7e7e7"></div>
<div class="vsep" style="left:659px;top:319px;height:14px;background:#e7e7e7"></div>
<div class="d c" style="left:452px;top:306px;width:81px;text-align:center">Security</div>
<div class="d c" style="left:533px;top:306px;width:119px;text-align:center">Previous Versions</div>
<div class="d c" style="left:652px;top:306px;width:73px;text-align:center">Quota</div>
<div class="d c" style="left:521px;top:320px;width:58px;text-align:center">Tools</div>
<div class="d c" style="left:583px;top:320px;width:76px;text-align:center">Hardware</div>
<div class="d c" style="left:659px;top:320px;width:66px;text-align:center">Sharing</div>
<!-- page -->
<div class="abs" style="left:452px;top:333px;width:275px;height:306px;background:#fafafa;border:1px solid #dcdcdc"></div>
<div class="abs" style="left:452px;top:317px;width:70px;height:17px;background:#fafafa;border:1px solid #dcdcdc;border-bottom:none"></div>
<div class="d c" style="left:452px;top:318.6px;width:68px;text-align:center">General</div>
<svg class="abs" style="left:463px;top:343px" width="25" height="21" viewBox="0 0 25 21"><g fill="#1b8fe2"><rect x=".6" y=".8" width="3.8" height="3.8"/><rect x="5" y=".8" width="3.8" height="3.8"/><rect x=".6" y="5.2" width="3.8" height="3.8"/><rect x="5" y="5.2" width="3.8" height="3.8"/></g><path d="M2.4 10.6 L21.6 9.6 L24 11.6 H1 Z" fill="#e2e2e2"/><rect x="1" y="11.6" width="23" height="8" rx=".6" fill="#383838"/><rect x="4" y="15.2" width="1.2" height="1.2" fill="#55e06a"/></svg>
<div class="abs" style="left:521px;top:349px;width:195px;height:17px;background:#fff;border:1px solid #e2e2e2;border-bottom:1px solid #868686;border-radius:2px"></div>
<div class="line" style="left:463px;top:376px;width:252px"></div>
<div class="d" style="left:463px;top:383.2px">Type:</div><div class="d" style="left:521px;top:383.2px">Local Disk</div>
<div class="d" style="left:463px;top:400px">File system:</div><div class="d" style="left:521px;top:400px">NTFS</div>
<div class="line" style="left:463px;top:417px;width:252px"></div>
<div class="abs" style="left:463px;top:424px;width:12px;height:12px;background:#26a0da"></div>
<div class="d" style="left:479.6px;top:423px">Used space:</div><div class="d r" style="left:561px;top:423px;width:100px;text-align:right">23,471,017,984 bytes</div><div class="d r" style="left:661px;top:423px;width:50px;text-align:right">21.8 GB</div>
<div class="abs" style="left:463px;top:440px;width:12px;height:12px;background:#a6a6a6"></div>
<div class="d" style="left:479.6px;top:440px">Free space:</div><div class="d r" style="left:561px;top:440px;width:100px;text-align:right">112,136,069,120 bytes</div><div class="d r" style="left:661px;top:440px;width:50px;text-align:right">104 GB</div>
<div class="line" style="left:463px;top:461px;width:252px"></div>
<div class="d" style="left:478.8px;top:466.6px">Capacity:</div><div class="d r" style="left:561px;top:466.6px;width:100px;text-align:right">135,607,087,104 bytes</div><div class="d r" style="left:661px;top:466.6px;width:50px;text-align:right">126 GB</div>
<svg class="abs" style="left:566px;top:485px" width="46" height="46" viewBox="-23 -23 46 46"><circle r="17.8" fill="none" stroke="#a6a6a6" stroke-width="9.2"/><path d="M-17.8 0 A17.8 17.8 0 0 1 -8.36 -15.72" fill="none" stroke="#26a0da" stroke-width="9.2"/></svg>
<div class="d" style="left:574.8px;top:540.8px">Drive C:</div>
<div class="btn" style="left:653px;top:534.6px;width:63px;height:16.4px"><span>Disk Cleanup</span></div>
<div class="line" style="left:463px;top:555.4px;width:252px"></div>
<div class="cb" style="left:462.8px;top:582.6px"></div>
<div class="d" style="left:474.8px;top:581.4px">Compress this drive to save disk space</div>
<div class="cb on" style="left:462.8px;top:600.6px"></div>
<div class="d" style="left:474.8px;top:599.2px;line-height:10.7px">Allow files on this drive to have contents indexed in addition to
file properties</div>
<div class="btn" style="left:541px;top:646.4px;width:57.6px;height:16px"><span>OK</span></div>
<div class="btn" style="left:605.4px;top:646.4px;width:57.6px;height:16px"><span>Cancel</span></div>
<div class="btn" style="left:670.4px;top:646.4px;width:56.6px;height:16px;color:#a3a3a3;background:#f6f6f6;border-color:#e4e4e4"><span>Apply</span></div>
</div>
<!--/PROPS-->
<!--CLEAN-->
<div id="clean" class="abs" style="left:0;top:0;width:1200px;height:719px">
<div class="dlg" style="left:750px;top:260px;width:298.6px;height:361.6px"><div class="tb" style="height:25px"></div></div>
<svg class="abs" style="left:756px;top:265px" width="15" height="13" viewBox="0 0 15 13"><path d="M1 1.6 L5 1 L13.6 1.4 L12.6 4 L4.4 4.4 Z" fill="#d9b24a"/><path d="M4.6 4.4 H12 L11.4 6.6 H5.2 Z" fill="#f2dc8a"/><rect x="2.6" y="7" width="11.4" height="1.4" fill="#d8d8d8"/><rect x="2.4" y="8.4" width="11.8" height="3.6" rx=".4" fill="#262626"/></svg>
<div class="t" style="left:774px;top:267.2px;color:#000;letter-spacing:-.06px">Disk Cleanup for  (C:)</div>
<svg class="abs" style="left:1031px;top:267px" width="10" height="10" viewBox="0 0 10 10" fill="none" stroke="#111" stroke-width="1.1"><path d="M1.1 1.1 L8.9 8.9 M8.9 1.1 L1.1 8.9"/></svg>
<!-- tab + page -->
<div class="abs" style="left:758px;top:305.6px;width:283px;height:285.6px;background:#fafafa;border:1px solid #dcdcdc"></div>
<div class="abs" style="left:758px;top:289px;width:60px;height:17.6px;background:#fafafa;border:1px solid #dcdcdc;border-bottom:none"></div>
<div class="d" style="left:762px;top:292px">Disk Cleanup</div>
<svg class="abs" style="left:768px;top:308px" width="25" height="20" viewBox="0 0 25 20"><g fill="#1b8fe2"><rect x=".4" y=".6" width="3.8" height="3.8"/><rect x="4.8" y=".6" width="3.8" height="3.8"/><rect x=".4" y="5" width="3.8" height="3.8"/><rect x="4.8" y="5" width="3.8" height="3.8"/></g><path d="M2 10.6 L21.4 9.4 L23.6 11.4 H.6 Z" fill="#e2e2e2"/><rect x=".6" y="11.4" width="23" height="7.4" rx=".6" fill="#383838"/><rect x="3.4" y="14.6" width="1.2" height="1.2" fill="#55e06a"/></svg>
<div class="d" style="left:801.2px;top:317px;line-height:10.8px;letter-spacing:-.15px">You can use Disk Cleanup to free up to 533 MB of disk
space on  (C:).</div>
<div class="d" style="left:768px;top:347.2px">Files to delete:</div>
<!-- listbox -->
<div id="flist" class="abs" style="left:767px;top:364px;width:265px;height:74px;background:#fff;border:1px solid #b4b4b4;border-top-color:#8a8a8a;overflow:hidden">
 <div class="abs" style="left:30px;top:1.4px;width:218.6px;height:12.6px;background:#0b62c6"></div>
 <div class="cb on" style="left:5.2px;top:2.4px"></div>
 <div class="cb on" style="left:5.2px;top:16px"></div>
 <div class="cb" style="left:5.2px;top:29.6px;border-color:#b0b0b0"></div>
 <div class="cb" style="left:5.2px;top:43.2px;border-color:#b0b0b0"></div>
 <div class="cb" style="left:5.2px;top:56.8px;border-color:#b0b0b0"></div>
 <div class="cb" style="left:5.2px;top:70.4px;border-color:#b0b0b0"></div>
 <div class="abs" style="left:19.6px;top:2px;width:9.6px;height:11.4px;background:#8c9fab"></div>
 <svg class="abs" style="left:18.6px;top:14px" width="12" height="13" viewBox="0 0 12 13"><path d="M3.4 6 V3.8 C3.4 2.2 4.4 1.2 6 1.2 C7.6 1.2 8.6 2.2 8.6 3.8 V6" fill="none" stroke="#c9a23a" stroke-width="1.5"/><rect x="1.6" y="5.6" width="8.8" height="6.6" rx=".8" fill="#e3b53c"/><rect x="5.4" y="7.6" width="1.2" height="2.6" fill="#8a6a14"/></svg>
 <svg class="abs" style="left:19.6px;top:28.6px" width="10" height="12" viewBox="0 0 10 12"><path d="M.6 .6 H6.4 L9.4 3.6 V11.4 H.6 Z" fill="#fbfbfb" stroke="#a8a8a8" stroke-width=".8"/><path d="M6.4 .6 V3.6 H9.4" fill="none" stroke="#a8a8a8" stroke-width=".8"/></svg>
 <svg class="abs" style="left:19.6px;top:42.2px" width="10" height="12" viewBox="0 0 10 12"><path d="M.6 .6 H6.4 L9.4 3.6 V11.4 H.6 Z" fill="#fbfbfb" stroke="#a8a8a8" stroke-width=".8"/><path d="M6.4 .6 V3.6 H9.4" fill="none" stroke="#a8a8a8" stroke-width=".8"/></svg>
 <svg class="abs" style="left:19.6px;top:55.8px" width="10" height="12" viewBox="0 0 10 12"><path d="M1 1 H9 L8.2 11.2 H1.8 Z" fill="#eef3f8" stroke="#9fb0c2" stroke-width=".7"/><circle cx="5" cy="6.2" r="2.2" fill="none" stroke="#1a7fe0" stroke-width="1.3" stroke-dasharray="2.6 1.4"/></svg>
 <svg class="abs" style="left:19.6px;top:69.4px" width="10" height="12" viewBox="0 0 10 12"><path d="M.6 .6 H6.4 L9.4 3.6 V11.4 H.6 Z" fill="#fbfbfb" stroke="#a8a8a8" stroke-width=".8"/></svg>
 <div class="d" style="left:31.4px;top:1.6px;color:#fff">Downloaded Program Files</div><div class="d r" style="left:180px;top:1.6px;width:64.4px;text-align:right;color:#fff">0 bytes</div>
 <div class="d" style="left:31.4px;top:15.2px">Temporary Internet Files</div><div class="d r" style="left:180px;top:15.2px;width:64.4px;text-align:right">5.92 MB</div>
 <div class="d" style="left:31.4px;top:28.8px">DirectX Shader Cache</div><div class="d r" style="left:180px;top:28.8px;width:64.4px;text-align:right">324 KB</div>
 <div class="d" style="left:31.4px;top:42.4px">Delivery Optimization Files</div><div class="d r" style="left:180px;top:42.4px;width:64.4px;text-align:right">520 MB</div>
 <div class="d" style="left:31.4px;top:56px">Recycle Bin</div><div class="d r" style="left:180px;top:56px;width:64.4px;text-align:right">0 bytes</div>
 <div class="abs" style="left:254.6px;top:13.6px;width:2.2px;height:31px;background:#868686;border-radius:1px"></div>
</div>
<div class="d" style="left:768px;top:443.8px">Total amount of disk space you gain:</div><div class="d r" style="left:960px;top:443.8px;width:64.8px;text-align:right">12.9 MB</div>
<div class="abs" style="left:768px;top:465px;width:264px;height:115px;border:1px solid #dcdcdc;border-radius:2px"></div>
<div class="d" style="left:772px;top:459px;background:#fafafa;padding:0 2.4px">Description</div>
<div class="d" style="left:774.6px;top:476.4px;line-height:10.34px">Downloaded Program Files are ActiveX controls and Java applets
downloaded automatically from the Internet when you view certain
pages. They are temporarily stored in the Downloaded Program
Files folder on your hard disk.</div>
<div class="btn" style="left:776.4px;top:555px;width:108px;height:16px;text-align:left;padding-left:20.4px"><span style="transform-origin:0 50%">Clean up system files</span></div>
<svg class="abs" style="left:785px;top:557.4px" width="11" height="12" viewBox="0 0 11 12"><path d="M5.5 .6 C7 1.8 8.8 2.2 10.4 2.2 V6 C10.4 9 8.2 10.8 5.5 11.6 C2.8 10.8 .6 9 .6 6 V2.2 C2.2 2.2 4 1.8 5.5 .6 Z" fill="#2f7fd8"/><path d="M5.5 .6 C7 1.8 8.8 2.2 10.4 2.2 V6 H5.5 Z" fill="#f5c62a"/><path d="M5.5 6 V11.6 C2.8 10.8 .6 9 .6 6 Z" fill="#f5c62a"/></svg>
<div class="btn" style="left:952.6px;top:555px;width:70px;height:16px"><span>View Files</span></div>
<div class="btn" style="left:919.6px;top:598.6px;width:58.4px;height:16px;border:1.4px solid #1b6ec2;line-height:13.2px"><span>OK</span></div>
<div class="btn" style="left:984.8px;top:598.6px;width:56.6px;height:16px"><span>Cancel</span></div>
</div>
<!--/CLEAN-->
<!--TASKBAR-->
<div id="task" class="abs"></div>
<div class="abs" style="left:0;top:716px;width:1200px;height:1px;background:#e4e4e4"></div>
<!-- widgets -->
<svg class="abs" style="left:10px;top:688px" width="21" height="19" viewBox="0 0 21 19"><defs><linearGradient id="wg1" x1="0" y1="0" x2="0" y2="1"><stop offset="0" stop-color="#4cc2f8"/><stop offset="1" stop-color="#1273e6"/></linearGradient></defs><rect x=".8" y=".8" width="19.4" height="17.4" rx="1" fill="#0f4ea0"/><rect x="2.2" y="2.4" width="7" height="14.2" fill="#f8fbff"/><rect x="10.8" y="2.4" width="8" height="14.2" fill="url(#wg1)"/></svg>
<!-- start -->
<svg class="abs" style="left:503px;top:688px" width="19" height="19" viewBox="0 0 19 19"><defs><linearGradient id="st1" x1="0" y1="0" x2="1" y2="1"><stop offset="0" stop-color="#3ab4f0"/><stop offset="1" stop-color="#0c78d4"/></linearGradient></defs><g fill="url(#st1)"><rect x=".4" y=".4" width="8.6" height="8.6"/><rect x="10" y=".4" width="8.6" height="8.6"/><rect x=".4" y="10" width="8.6" height="8.6"/><rect x="10" y="10" width="8.6" height="8.6"/></g></svg>
<!-- search -->
<svg class="abs" style="left:538px;top:688px" width="19" height="19" viewBox="0 0 19 19" fill="none" stroke="#1a1a1a" stroke-width="2"><circle cx="11" cy="7.6" r="5.8"/><path d="M6.8 12 L1.6 17.4" stroke-linecap="round"/></svg>
<!-- task view -->
<svg class="abs" style="left:573px;top:688px" width="20" height="19" viewBox="0 0 20 19"><rect x="8" y="1" width="11.4" height="12" fill="#fafafa" stroke="#e2e2e2" stroke-width=".5"/><rect x=".4" y="6" width="14.4" height="12" fill="#1c1c1c"/><rect x="5.4" y="5.8" width="10" height="7.8" fill="#b4b4b4"/></svg>
<!-- chat -->
<svg class="abs" style="left:607px;top:687px" width="21" height="21" viewBox="0 0 21 21"><defs><linearGradient id="ch1" x1="0" y1="0" x2="1" y2="1"><stop offset="0" stop-color="#7b7ce0"/><stop offset="1" stop-color="#4c4fb6"/></linearGradient></defs><path d="M10.5 1 C15.8 1 20 5 20 10 C20 15 15.8 19 10.5 19 C9 19 7.6 18.7 6.4 18.2 L2 19.6 L3.2 15.6 C1.8 14 1 12.1 1 10 C1 5 5.2 1 10.5 1 Z" fill="url(#ch1)"/><rect x="5.6" y="6.6" width="7" height="6.6" rx="1.4" fill="#fff"/><path d="M13 9 L16 7 V13 L13 11 Z" fill="#fff"/></svg>
<!-- explorer -->
<svg class="abs" style="left:643px;top:687px" width="21" height="21" viewBox="0 0 21 21"><path d="M.8 3 C.8 2 1.4 1.4 2.4 1.4 H7 L9 3.6 H18.6 C19.6 3.6 20.2 4.2 20.2 5.2 V8 H.8 Z" fill="#e8a620"/><rect x=".8" y="5" width="19.4" height="13.6" rx="1.2" fill="#fbd35a"/><path d="M.8 13 H20.2 V17.4 C20.2 18.2 19.6 18.6 18.8 18.6 H2.2 C1.4 18.6 .8 18.2 .8 17.4 Z" fill="#f2b92e"/><rect x="5" y="12" width="11" height="6.6" fill="#1f7ad8"/><rect x="6.6" y="15.6" width="7.8" height="3" fill="#1457a8"/></svg>
<div class="abs" style="left:650.6px;top:710.4px;width:5px;height:2px;border-radius:1px;background:#7a7a7a"></div>
<!-- edge -->
<svg class="abs" style="left:678px;top:687px" width="21" height="21" viewBox="0 0 41 40"><path d="M1.5 21 C1.5 9 10 1 21 1 C32 1 40 9 40 18.5 C40 25 35 28.5 29.5 28.5 C25.5 28.5 23.5 27 24.5 25.2 C26 23 26 21 25.5 19 C24.5 15 21 13 17 13 C10 13 4 17.5 1.5 21 Z" fill="url(#eg1)"/><path d="M1.5 21 C1.5 31 9.5 39 20 39 C24 39 27 38 28.5 37 C21 37.5 14.5 32.5 14 25.5 C13.8 19.5 18.5 15.5 22.5 15 C15 12.5 5 15 1.5 21 Z" fill="url(#eg2)"/><path d="M14 25.5 C14.5 32.5 21 37.8 28.5 37 C33 35.5 36.5 32 38.5 28 C39 27 38 26.6 37.2 27.2 C34 29.5 28.5 30 25 28 C20.5 25.5 20 20 22.5 15 C18.5 15.5 13.8 19.5 14 25.5 Z" fill="url(#eg3)"/></svg>
<!-- store -->
<svg class="abs" style="left:713px;top:687px" width="21" height="21" viewBox="0 0 21 21"><path d="M6.4 6 V4.2 C6.4 2.6 7.4 1.8 9 1.8 H12 C13.6 1.8 14.6 2.6 14.6 4.2 V6" fill="none" stroke="#3a9fe6" stroke-width="1.5"/><rect x="1.2" y="5" width="18.6" height="15" rx="1.6" fill="#15477f"/><rect x="6.6" y="8.4" width="3.4" height="3.4" fill="#e8663a"/><rect x="11" y="8.4" width="3.4" height="3.4" fill="#8cbf3a"/><rect x="6.6" y="12.8" width="3.4" height="3.4" fill="#2aa8ea"/><rect x="11" y="12.8" width="3.4" height="3.4" fill="#f5bf3a"/></svg>
<!-- disk cleanup active -->
<div class="abs" style="left:742px;top:682px;width:31px;height:33px;border-radius:3px;background:#fbfbfb;box-shadow:0 0 0 .6px #e6e6e6"></div>
<svg class="abs" style="left:748px;top:691px" width="20" height="15" viewBox="0 0 20 15"><path d="M1.6 9 L7.4 7.8 L18.4 8.6 L18.8 11 L12 13.6 L2 12 Z" fill="#e9e9e9" stroke="#bdbdbd" stroke-width=".5"/><path d="M2 9.4 L7.4 8.4 L7.6 11 L2.2 11.8 Z" fill="#2a2a2a"/><path d="M2.2 11.6 L11.8 13 L12 13.8 L2 12.2 Z" fill="#1c1c1c"/><path d="M2.6 2.6 L6 .8 L16.6 4.2 L17.6 7.4 L13.8 8.2 L12.6 5.8 L3.4 4 Z" fill="#c9a43e"/><path d="M12.6 5.8 L16.4 4.6 L17.6 7.4 L13.8 8.2 Z" fill="#f2dc8c"/></svg>
<div class="abs" style="left:751.4px;top:710px;width:12.6px;height:2px;border-radius:1px;background:#1b62bc"></div>
<!-- tray -->
<svg class="abs" style="left:1131px;top:693px" width="12" height="8" viewBox="0 0 12 8" fill="none" stroke="#1a1a1a" stroke-width="1.3"><path d="M1.2 6.6 L6 1.6 L10.8 6.6"/></svg>
<svg class="abs" style="left:1152px;top:691px" width="15" height="15" viewBox="0 0 15 15" fill="none" stroke="#1a1a1a" stroke-width="1.1"><path d="M10.4 2.4 H2.4 C1.8 2.4 1.4 2.8 1.4 3.4 V9.6 C1.4 10.2 1.8 10.6 2.4 10.6 H10.4"/><path d="M5 13.2 H10.4 M7 10.6 V13"/><rect x="11.4" y="1" width="2.4" height="3.6" rx=".6"/><path d="M12.6 4.6 V13.6"/></svg>
<svg class="abs" style="left:1172px;top:692px" width="15" height="14" viewBox="0 0 15 14"><path d="M5 1.6 L2.8 3.8 H1.2 V6.8 H2.8 L5 9" fill="none" stroke="#1a1a1a" stroke-width="1.1"/><circle cx="9.6" cy="8.6" r="3.4" fill="#1a1a1a"/><path d="M8.2 7.2 L11 10 M11 7.2 L8.2 10" stroke="#fff" stroke-width="1"/></svg>
<div class="abs" style="left:1198px;top:700px;width:3px;height:5px;background:#3a3a3a;border-radius:1px"></div>
<!--/TASKBAR-->
</div>
</body>
</html>
